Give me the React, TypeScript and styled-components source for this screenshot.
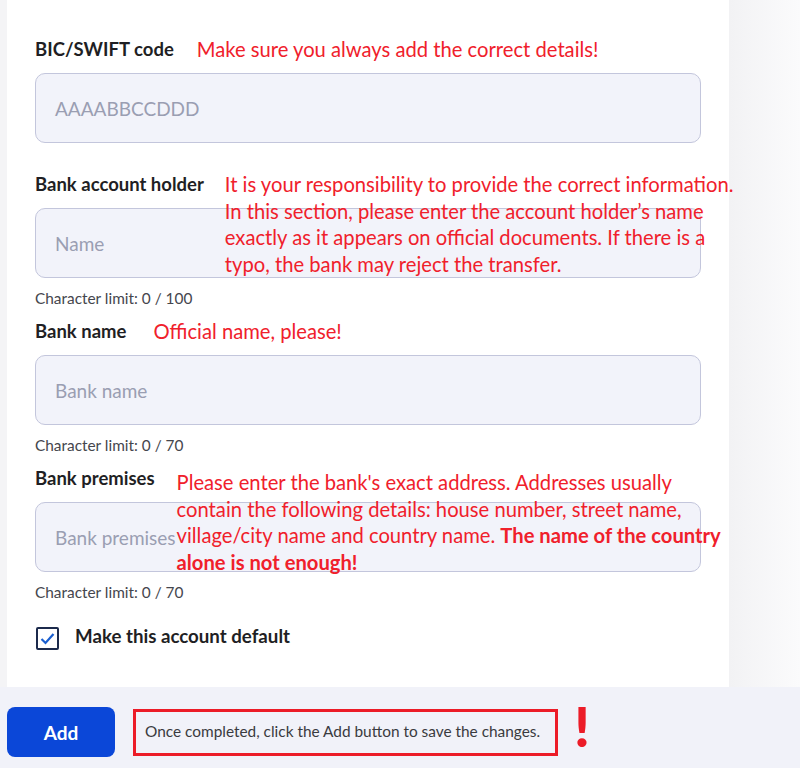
import React from "react";
import styled, { createGlobalStyle } from "styled-components";

const GlobalStyle = createGlobalStyle`
  html, body {
    margin: 0;
    padding: 0;
    background: #ffffff;
  }
  body {
    font-family: Lato, "Liberation Sans", sans-serif;
  }
`;

const Page = styled.div`
  width: 800px;
  height: 768px;
  display: flex;
  flex-direction: column;
  overflow: hidden;
`;

const Main = styled.div`
  display: flex;
  flex: 1;
`;

const LeftStrip = styled.div`
  width: 7px;
  background: #f4f4f6;
`;

const RightArea = styled.div`
  flex: 1;
  background: linear-gradient(to right, #f2f2f4, #fbfbfc);
`;

const Panel = styled.div`
  width: 722px;
  background: #ffffff;
  padding: 37px 28px 0 28px;
  box-sizing: border-box;
  display: flex;
  flex-direction: column;
`;

const Field = styled.div<{ $gap: number }>`
  display: flex;
  flex-direction: column;
  margin-top: ${p => p.$gap}px;
`;

const LabelRow = styled.div<{ $noteOffset: number }>`
  display: flex;
  align-items: flex-start;
  height: 24px;
  margin-bottom: 12px;
  gap: ${p => p.$noteOffset}px;
`;

const Label = styled.span`
  font-family: Lato, sans-serif;
  font-weight: 700;
  font-size: 18.5px;
  line-height: 24px;
  color: #1f1f24;
  white-space: nowrap;
`;

const Note = styled.div<{ $drop: number }>`
  position: relative;
  z-index: 1;
  font-family: Lato, "Liberation Sans", sans-serif;
  font-size: 20.2px;
  line-height: 26.5px;
  color: #f0202b;
  margin-top: ${p => p.$drop - 1}px;
  white-space: nowrap;

  b {
    font-weight: 700;
  }
`;

const InputBox = styled.div`
  height: 70px;
  box-sizing: border-box;
  border: 1px solid #c3c6dc;
  border-radius: 10px;
  background: #f2f3fa;
  display: flex;
  align-items: center;
  padding-left: 19px;
`;

const Placeholder = styled.span`
  font-family: Lato, sans-serif;
  font-size: 19px;
  color: #9a9eb2;
`;

const Hint = styled.div`
  margin-top: 10px;
  font-family: Lato, sans-serif;
  font-size: 15.4px;
  line-height: 21px;
  color: #45464d;
`;

const CheckRow = styled.label`
  display: flex;
  align-items: center;
  gap: 16px;
  margin-top: 24px;
  margin-left: 1px;
  height: 23px;
`;

const CheckBox = styled.span`
  width: 23px;
  height: 23px;
  box-sizing: border-box;
  border: 2px solid #1c2a4c;
  border-radius: 2px;
  display: flex;
  align-items: center;
  justify-content: center;
`;

const CheckLabel = styled.span`
  font-family: Lato, sans-serif;
  font-weight: 700;
  font-size: 18.7px;
  color: #1f1f24;
  margin-top: -5px;
`;

const BottomBar = styled.div`
  height: 81px;
  box-sizing: border-box;
  background: #f1f2f9;
  display: flex;
  align-items: flex-start;
  padding: 20px 7px 0 7px;
  gap: 18px;
`;

const AddButton = styled.button`
  width: 108px;
  height: 50px;
  border: none;
  border-radius: 8px;
  background: #0b47d8;
  color: #ffffff;
  font-family: Lato, sans-serif;
  font-weight: 700;
  font-size: 19px;
`;

const NoteBox = styled.div`
  width: 425px;
  height: 47px;
  box-sizing: border-box;
  border: 3px solid #ec1c28;
  display: flex;
  align-items: center;
  padding: 0 0 3px 9px;
  margin-top: 2px;
  font-family: Lato, "Liberation Sans", sans-serif;
  font-size: 15.4px;
  color: #3a3b40;
`;

const Bang = styled.span`
  font-family: Lato, sans-serif;
  font-weight: 900;
  font-size: 56px;
  line-height: 50px;
  color: #ec1c28;
  margin-left: -2px;
  margin-top: -6px;
`;

type FieldProps = {
  label: string;
  placeholder: string;
  gap: number;
  noteOffset: number;
  note: React.ReactNode;
  noteDrop?: number;
  limit?: number;
};

const FormField = ({ label, placeholder, gap, noteOffset, note, noteDrop = 0, limit }: FieldProps) => (
  <Field $gap={gap}>
    <LabelRow $noteOffset={noteOffset}>
      <Label>{label}</Label>
      <Note $drop={noteDrop}>{note}</Note>
    </LabelRow>
    <InputBox>
      <Placeholder>{placeholder}</Placeholder>
    </InputBox>
    {limit !== undefined && <Hint>Character limit: 0 / {limit}</Hint>}
  </Field>
);

const App = () => (
  <Page>
    <GlobalStyle />
    <Main>
      <LeftStrip />
      <Panel>
        <FormField
          label="BIC/SWIFT code"
          placeholder="AAAABBCCDDD"
          gap={0}
          noteOffset={23}
          note="Make sure you always add the correct details!"
        />
        <FormField
          label="Bank account holder"
          placeholder="Name"
          gap={29}
          noteOffset={21}
          limit={100}
          note={
            <>
              It is your responsibility to provide the correct information.
              <br />
              In this section, please enter the account holder’s name
              <br />
              exactly as it appears on official documents. If there is a
              <br />
              typo, the bank may reject the transfer.
            </>
          }
        />
        <FormField
          label="Bank name"
          placeholder="Bank name"
          gap={10}
          noteOffset={27}
          limit={70}
          note="Official name, please!"
        />
        <FormField
          label="Bank premises"
          placeholder="Bank premises"
          gap={10}
          noteOffset={22}
          noteDrop={4}
          limit={70}
          note={
            <>
              Please enter the bank's exact address. Addresses usually
              <br />
              contain the following details: house number, street name,
              <br />
              village/city name and country name. <b>The name of the country</b>
              <br />
              <b>alone is not enough!</b>
            </>
          }
        />
        <CheckRow>
          <CheckBox>
            <svg width="17" height="17" viewBox="0 0 17 17">
              <path d="M2.5 9 L6.5 13 L14.5 4" fill="none" stroke="#1a5fd0" strokeWidth="2.2" />
            </svg>
          </CheckBox>
          <CheckLabel>Make this account default</CheckLabel>
        </CheckRow>
      </Panel>
      <RightArea />
    </Main>
    <BottomBar>
      <AddButton>Add</AddButton>
      <NoteBox>Once completed, click the Add button to save the changes.</NoteBox>
      <Bang>!</Bang>
    </BottomBar>
  </Page>
);

export default App;
